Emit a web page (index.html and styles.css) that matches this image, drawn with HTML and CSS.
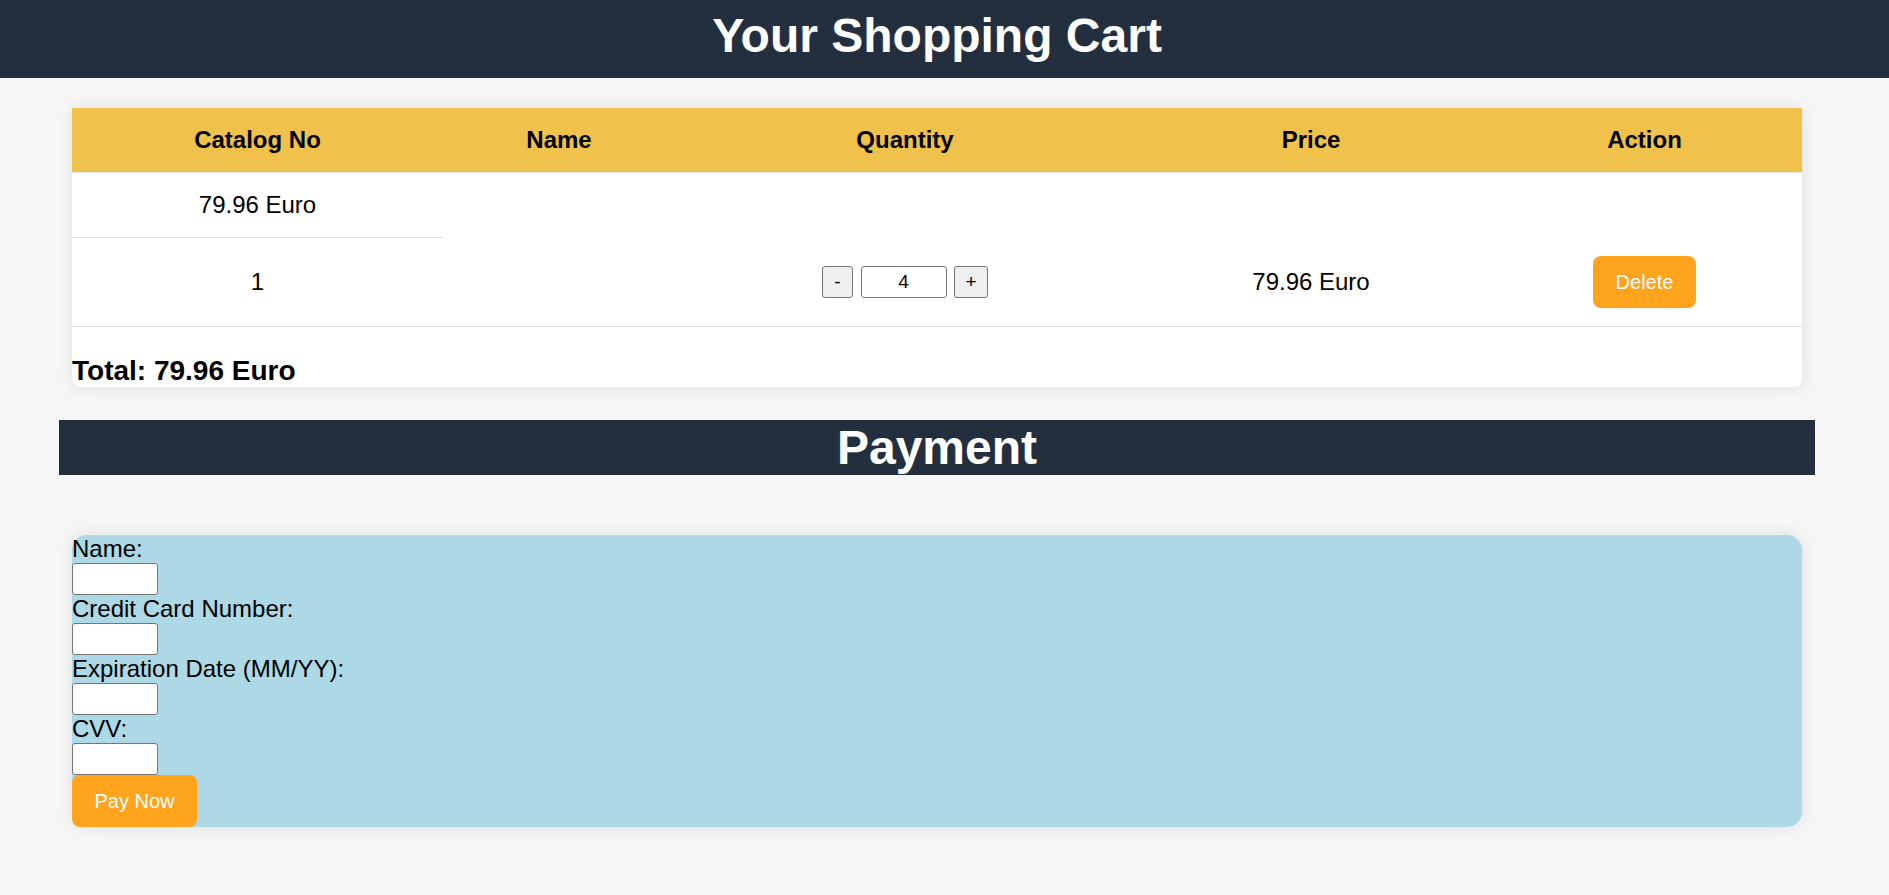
FILE: index.html
```html
<!DOCTYPE html>
<html lang="en">
<head>
<meta charset="utf-8">
<title>Your Shopping Cart</title>
<link rel="stylesheet" href="styles.css">
</head>
<body>
<header class="top-bar">
  <h1 class="top-title">Your Shopping Cart</h1>
</header>
<main class="page">
  <section class="cart-card">
    <table class="cart-table">
      <colgroup>
        <col class="col-catalog">
        <col class="col-name">
        <col class="col-qty">
        <col class="col-price">
        <col class="col-action">
      </colgroup>
      <thead>
        <tr>
          <th>Catalog No</th>
          <th>Name</th>
          <th>Quantity</th>
          <th>Price</th>
          <th>Action</th>
        </tr>
      </thead>
      <tbody>
        <tr>
          <td>79.96 Euro</td>
        </tr>
        <tr>
          <td>1</td>
          <td></td>
          <td>
            <div class="qty">
              <button class="qty-btn qty-minus" type="button">-</button>
              <input class="qty-input" type="text" value="4">
              <button class="qty-btn qty-plus" type="button">+</button>
            </div>
          </td>
          <td>79.96 Euro</td>
          <td><button class="orange-btn" type="button">Delete</button></td>
        </tr>
      </tbody>
    </table>
    <h3 class="total">Total: 79.96 Euro</h3>
  </section>

  <h1 class="pay-title">Payment</h1>

  <form class="pay-form">
    <label class="pay-label" for="name">Name:</label>
    <input class="pay-input" id="name" type="text">
    <label class="pay-label" for="card">Credit Card Number:</label>
    <input class="pay-input" id="card" type="text">
    <label class="pay-label" for="exp">Expiration Date (MM/YY):</label>
    <input class="pay-input" id="exp" type="text">
    <label class="pay-label" for="cvv">CVV:</label>
    <input class="pay-input" id="cvv" type="text">
    <button class="orange-btn pay-btn" type="button">Pay Now</button>
  </form>
</main>
</body>
</html>
```
FILE: styles.css
```css
html, body {
  margin: 0;
  padding: 0;
}

body {
  background: #f6f6f6;
  font-family: "Liberation Sans", Arial, sans-serif;
  color: #000;
}

.top-bar {
  background: #232f3e;
  padding: 8px 15px 15px 0;
}

.top-title {
  margin: 0;
  color: #fff;
  text-align: center;
  font-size: 48px;
  line-height: 55px;
  font-weight: bold;
}

.page {
  padding: 0 87px 60px 72px;
}

.cart-card {
  margin-top: 30px;
  background: #fff;
  border-radius: 8px;
  box-shadow: 0 0 15px rgba(0, 0, 0, 0.1);
  display: flow-root;
}

.cart-table {
  width: 100%;
  table-layout: fixed;
  border-collapse: collapse;
  font-size: 24px;
  line-height: 28px;
}

.col-catalog { width: 371px; }
.col-name { width: 232px; }
.col-qty { width: 460px; }
.col-price { width: 352px; }
.col-action { width: 315px; }

.cart-table th {
  background: #f0c14b;
  font-weight: bold;
  padding: 18px 0;
  text-align: center;
  border-bottom: 1px solid #e6e6e6;
}

.cart-table td {
  padding: 18px 0;
  text-align: center;
  vertical-align: middle;
  border-bottom: 1px solid #dddddd;
}

.qty {
  display: flex;
  justify-content: center;
  align-items: center;
  gap: 7.5px;
}

.qty-btn {
  box-sizing: border-box;
  height: 32px;
  padding: 0;
  background: #efefef;
  border: 1px solid #767676;
  border-radius: 3px;
  font-family: "Liberation Sans", Arial, sans-serif;
  font-size: 19px;
  color: #000;
}

.qty-minus { width: 31px; }
.qty-plus { width: 34px; }

.qty-input {
  box-sizing: border-box;
  width: 86px;
  height: 32px;
  padding: 0;
  border: 1px solid #767676;
  border-radius: 3px;
  text-align: center;
  font-family: "Liberation Sans", Arial, sans-serif;
  font-size: 19px;
  color: #000;
  background: #fff;
}

.orange-btn {
  background: #ffa41c;
  color: #fff;
  border: none;
  border-radius: 8px;
  padding: 15px 22.5px;
  font-family: "Liberation Sans", Arial, sans-serif;
  font-size: 20px;
  line-height: 22px;
}

.total {
  margin: 28px 0 0;
  font-size: 28px;
  line-height: 32px;
  font-weight: bold;
}

.pay-title {
  margin: 33px -13px 0 -13px;
  background: #232f3e;
  color: #fff;
  text-align: center;
  font-size: 48px;
  line-height: 55px;
  font-weight: bold;
}

.pay-form {
  margin-top: 60px;
  background: #add8e6;
  border-radius: 15px;
  box-shadow: 0 0 15px rgba(0, 0, 0, 0.1);
}

.pay-label {
  display: block;
  font-size: 24px;
  line-height: 28px;
}

.pay-input {
  display: block;
  box-sizing: border-box;
  width: 86px;
  height: 32px;
  margin: 0;
  padding: 0 3px;
  border: 1px solid #767676;
  border-radius: 3px;
  background: #fff;
  font-size: 20px;
}

.pay-btn {
  display: block;
}
```
